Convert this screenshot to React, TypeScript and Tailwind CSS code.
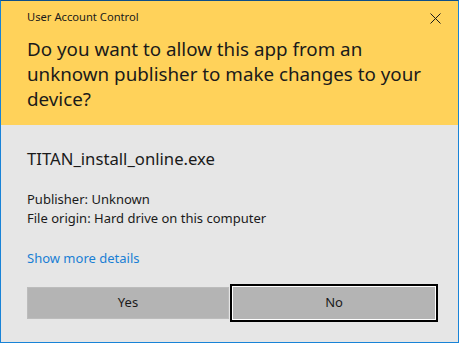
import React from "react";

export default function App() {
  return (
    <div className="w-[459px] h-[343px] bg-[#e6e6e6] border border-[#1883d7] border-t-[#0d4f8a] flex flex-col font-['Noto_Sans',sans-serif] text-[#1a1a1a] overflow-hidden">
      <div className="bg-[#ffd25a] h-[124px] pl-[26px] pr-[16px] pt-[8px] relative">
        <div className="text-[11.2px] leading-[16px]">User Account Control</div>
        <svg className="absolute right-[17px] top-[12px]" width="11" height="11" viewBox="0 0 11 11">
          <path d="M0.5 0.5 L10.5 10.5 M10.5 0.5 L0.5 10.5" stroke="#1a1a1a" strokeWidth="1" fill="none" />
        </svg>
        <h1 className="mt-[12px] text-[18.8px] leading-[25px] whitespace-nowrap">
          Do you want to allow this app from an
          <br />
          unknown publisher to make changes to your
          <br />
          device?
        </h1>
      </div>

      <div className="pl-[26px] pr-[22px]">
        <div className="mt-[23px] text-[16.7px] leading-[22px]">TITAN_install_online.exe</div>
        <div className="mt-[20px] text-[13px] leading-[19px]">
          <div>Publisher: Unknown</div>
          <div>File origin: Hard drive on this computer</div>
        </div>
        <div className="mt-[21px] text-[13px] leading-[18px] text-[#1a7fd4]">Show more details</div>

        <div className="mt-[20px] flex gap-[4px]">
          <button className="w-[202px] h-[32px] bg-[#b4b4b4] border border-[#bcbcbc] text-[13px] text-[#1a1a1a]">
            Yes
          </button>
          <button className="w-[202px] h-[32px] bg-[#b4b4b4] shadow-[0_0_0_1px_#ffffff,0_0_0_3px_#000000] text-[13px] text-[#1a1a1a]">
            No
          </button>
        </div>
      </div>
    </div>
  );
}
